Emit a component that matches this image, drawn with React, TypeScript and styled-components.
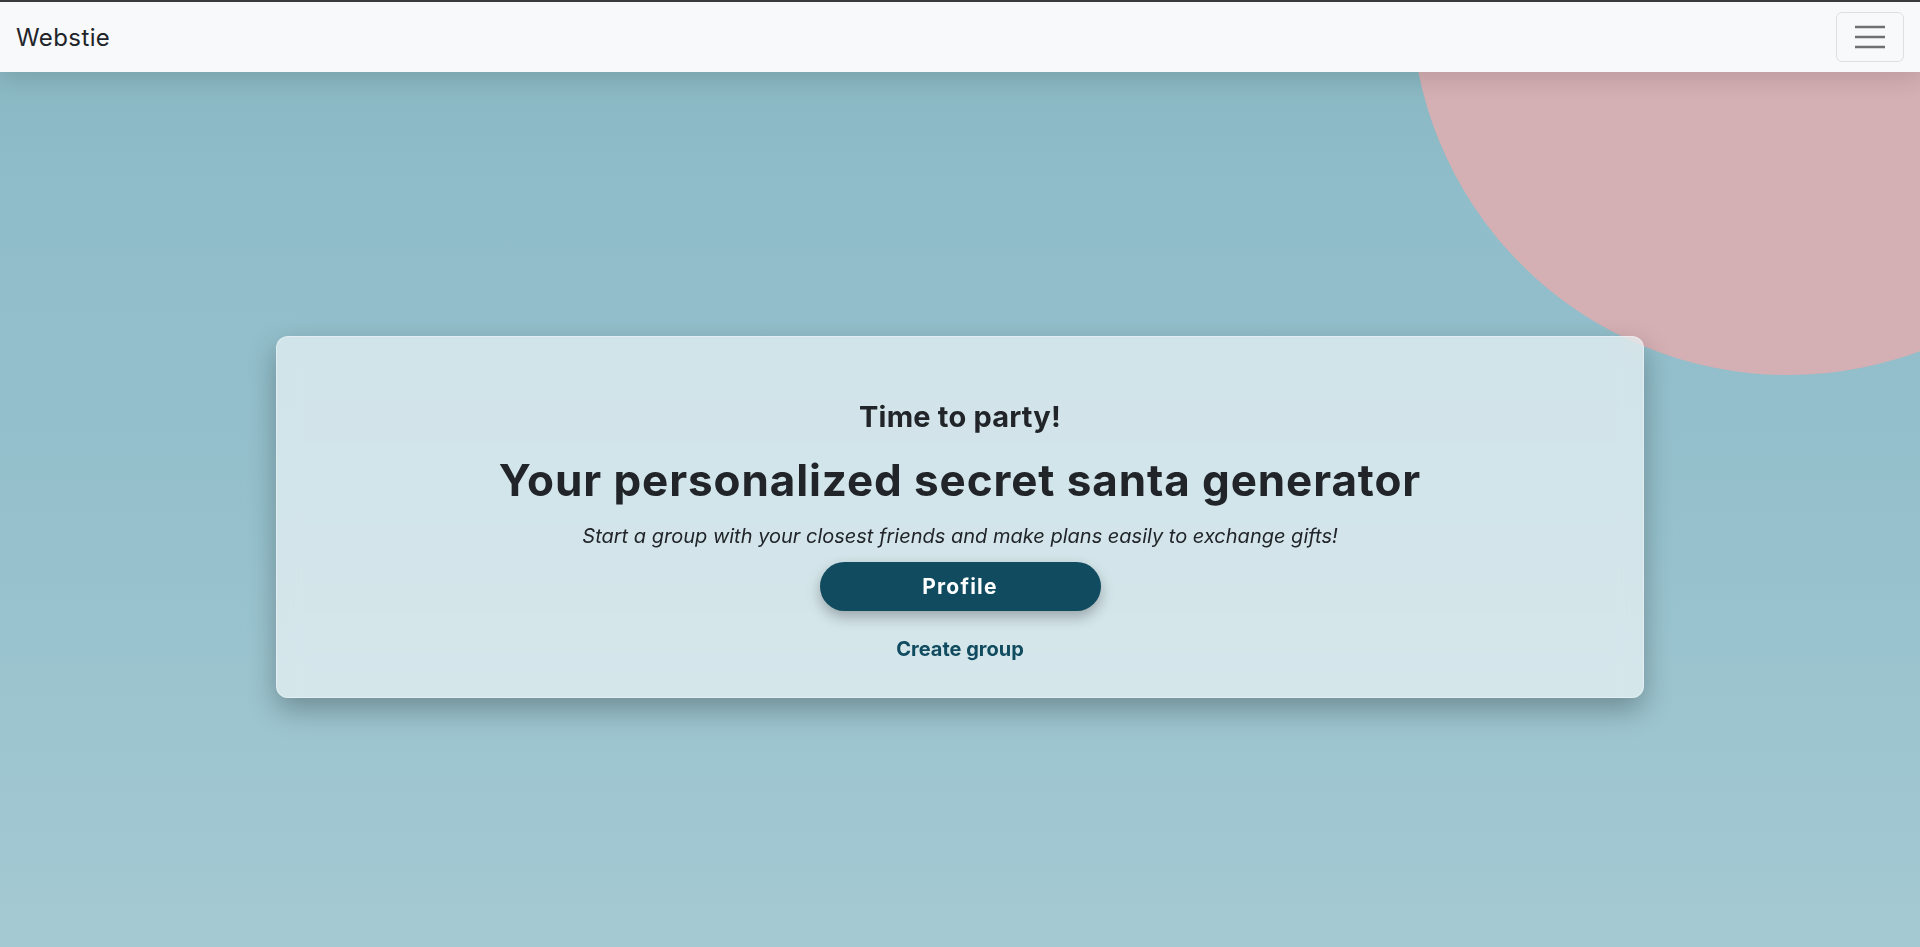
import React from "react";
import styled, { createGlobalStyle } from "styled-components";

const GlobalStyle = createGlobalStyle`
  * { box-sizing: border-box; }
  html, body { margin: 0; padding: 0; }
  body {
    font-family: Inter, "Liberation Sans", sans-serif;
    color: #212529;
    overflow: hidden;
  }
`;

const Page = styled.div`
  position: relative;
  min-height: 100vh;
  overflow: hidden;
  background: linear-gradient(180deg, #86b4be 0%, #8fbdc9 20%, #94c0cc 50%, #a4c9d3 100%);
`;

const Blob = styled.div`
  position: absolute;
  left: 1411px;
  top: -379px;
  width: 754px;
  height: 754px;
  border-radius: 50%;
  background: #d4afb3;
  z-index: 0;
`;

const Navbar = styled.nav`
  position: relative;
  z-index: 3;
  height: 72px;
  border-top: 2px solid #3b3b3b;
  background: #f8f9fa;
  display: flex;
  align-items: center;
  justify-content: space-between;
  padding: 0 16px;
  box-shadow: 0 6px 24px rgba(0, 0, 0, 0.12);
`;

const Brand = styled.a`
  font-family: Inter, "Liberation Sans", sans-serif;
  font-size: 24px;
  font-weight: 400;
  letter-spacing: 0.4px;
  color: #212529;
  text-decoration: none;
`;

const Toggler = styled.button`
  width: 68px;
  height: 50px;
  border: 1px solid rgba(0, 0, 0, 0.1);
  border-radius: 6px;
  background: transparent;
  display: flex;
  align-items: center;
  justify-content: center;
  padding: 0;
`;

const Main = styled.main`
  position: relative;
  z-index: 1;
  min-height: calc(100vh - 72px);
  padding-top: 15px;
  display: flex;
  align-items: center;
  justify-content: center;
`;

const Card = styled.section`
  width: 1368px;
  height: 362px;
  border-radius: 12px;
  background: rgba(255, 255, 255, 0.58);
  backdrop-filter: blur(12px);
  border: 1px solid rgba(255, 255, 255, 0.35);
  box-shadow: 0 12px 28px rgba(0, 0, 0, 0.28);
  display: flex;
  flex-direction: column;
  align-items: center;
  padding-top: 63px;
  text-align: center;
`;

const Eyebrow = styled.h3`
  margin: 0;
  font-size: 29px;
  font-weight: 700;
  line-height: 1.2;
  letter-spacing: 0.2px;
  color: #212529;
`;

const Title = styled.h1`
  margin: 19px 0 0;
  font-size: 44px;
  font-weight: 700;
  line-height: 1.2;
  letter-spacing: 0.9px;
  color: #212529;
`;

const Lead = styled.p`
  margin: 16px 0 0;
  font-size: 20px;
  font-style: italic;
  font-weight: 400;
  line-height: 1.3;
  color: #212529;
`;

const PrimaryButton = styled.button`
  margin-top: 13px;
  width: 281px;
  height: 49px;
  border: none;
  border-radius: 25px;
  background: #114b5f;
  color: #ffffff;
  font-family: Inter, "Liberation Sans", sans-serif;
  font-size: 21px;
  font-weight: 700;
  letter-spacing: 1.2px;
  box-shadow: 0 6px 14px rgba(0, 0, 0, 0.28);
  cursor: pointer;
`;

const LinkButton = styled.a`
  margin-top: 26px;
  font-size: 20px;
  font-weight: 700;
  color: #114b5f;
  text-decoration: none;
`;

const MenuIcon = () => (
  <svg width="30" height="30" viewBox="0 0 30 30" aria-hidden>
    <path
      d="M0 5h30M0 15h30M0 25h30"
      stroke="#6f7071"
      strokeWidth="2.4"
    />
  </svg>
);

export default function App() {
  return (
    <>
      <GlobalStyle />
      <Page>
        <Blob />
        <Navbar>
          <Brand href="#">Webstie</Brand>
          <Toggler aria-label="Toggle navigation">
            <MenuIcon />
          </Toggler>
        </Navbar>
        <Main>
          <Card>
            <Eyebrow>Time to party!</Eyebrow>
            <Title>Your personalized secret santa generator</Title>
            <Lead>Start a group with your closest friends and make plans easily to exchange gifts!</Lead>
            <PrimaryButton>Profile</PrimaryButton>
            <LinkButton href="#">Create group</LinkButton>
          </Card>
        </Main>
      </Page>
    </>
  );
}
